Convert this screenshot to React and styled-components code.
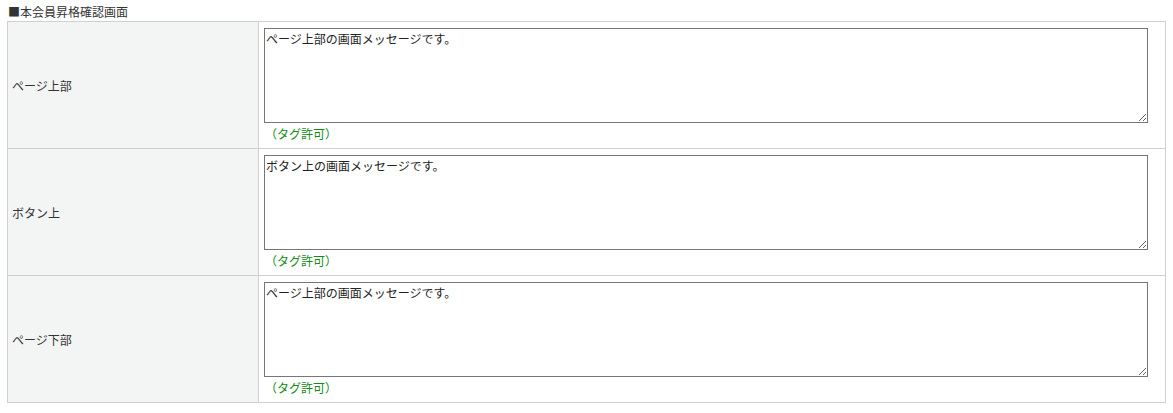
import styled, { createGlobalStyle } from 'styled-components';

const GlobalStyle = createGlobalStyle`
  body {
    margin: 0;
    background: #fff;
    font-family: "Noto Sans CJK JP", "Noto Sans", sans-serif;
    font-size: 12px;
    color: #333;
  }
`;

const Wrapper = styled.div`
  padding: 4px 8px 0 7px;
`;

const Heading = styled.div`
  padding-left: 1px;
  height: 17px;
  line-height: 16px;
  font-size: 12px;
  color: #333;
`;

const Table = styled.table`
  width: 1159px;
  border-collapse: collapse;
  border: 1px solid #d0d0d0;
`;

const Label = styled.th`
  width: 241px;
  padding: 0 5px 0 4px;
  background: #f3f4f4;
  border: 1px solid #d0d0d0;
  text-align: left;
  font-weight: normal;
  vertical-align: middle;
`;

const Field = styled.td`
  padding: 6px 5px 5px 5px;
  border: 1px solid #d0d0d0;
  vertical-align: top;
`;

const TextArea = styled.textarea`
  display: block;
  box-sizing: border-box;
  width: 884px;
  height: 95px;
  margin: 0;
  padding: 2px 1px;
  border: 1px solid #767676;
  border-radius: 0;
  font-family: "Noto Sans CJK JP", "Noto Sans", sans-serif;
  font-size: 12px;
  line-height: 16px;
  color: #222;
`;

const Note = styled.div`
  margin-top: 2px;
  padding-left: 1px;
  line-height: 18px;
  color: #138c13;
`;

const rows = [
  { label: 'ページ上部', value: 'ページ上部の画面メッセージです。' },
  { label: 'ボタン上', value: 'ボタン上の画面メッセージです。' },
  { label: 'ページ下部', value: 'ページ上部の画面メッセージです。' },
];

export default function App() {
  return (
    <Wrapper>
      <GlobalStyle />
      <Heading>■本会員昇格確認画面</Heading>
      <Table>
        <tbody>
          {rows.map((row, i) => (
            <tr key={i}>
              <Label>{row.label}</Label>
              <Field>
                <TextArea defaultValue={row.value} />
                <Note>（タグ許可）</Note>
              </Field>
            </tr>
          ))}
        </tbody>
      </Table>
    </Wrapper>
  );
}
